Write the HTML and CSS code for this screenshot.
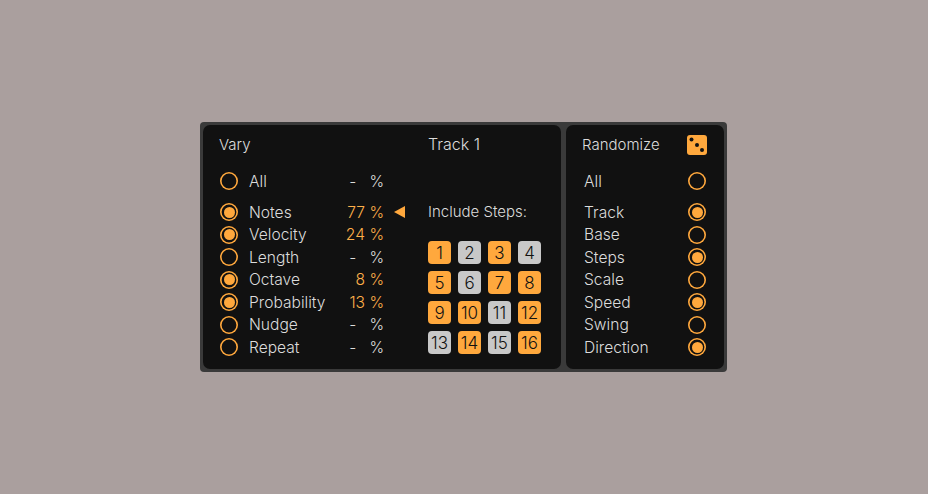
FILE: index.html
```html
<!doctype html>
<html lang="en">
<head>
    <meta charset="UTF-8">
    <title>Vary / Randomize</title>
    <link rel="stylesheet" href="styles.css">
</head>
<body>
    <div class="device">
        <section class="panel vary">
            <div class="vary-list">
                <h2 class="title">Vary</h2>
                <div class="row all"><span class="radio"></span><span class="name">All</span><span class="pct">-&nbsp;&nbsp;&nbsp;%</span></div>
                <div class="group">
                    <div class="row"><span class="radio on"></span><span class="name">Notes</span><span class="pct hot">77 %</span><span class="arrow"></span></div>
                    <div class="row"><span class="radio on"></span><span class="name">Velocity</span><span class="pct hot">24 %</span></div>
                    <div class="row"><span class="radio"></span><span class="name">Length</span><span class="pct">-&nbsp;&nbsp;&nbsp;%</span></div>
                    <div class="row"><span class="radio on"></span><span class="name">Octave</span><span class="pct hot">8 %</span></div>
                    <div class="row"><span class="radio on"></span><span class="name">Probability</span><span class="pct hot">13 %</span></div>
                    <div class="row"><span class="radio"></span><span class="name">Nudge</span><span class="pct">-&nbsp;&nbsp;&nbsp;%</span></div>
                    <div class="row"><span class="radio"></span><span class="name">Repeat</span><span class="pct">-&nbsp;&nbsp;&nbsp;%</span></div>
                </div>
            </div>
            <div class="track">
                <h2 class="title">Track 1</h2>
                <div class="include">Include Steps:</div>
                <div class="steps">
                    <span class="step on">1</span><span class="step">2</span><span class="step on">3</span><span class="step">4</span>
                    <span class="step on">5</span><span class="step">6</span><span class="step on">7</span><span class="step on">8</span>
                    <span class="step on">9</span><span class="step on">10</span><span class="step">11</span><span class="step on">12</span>
                    <span class="step">13</span><span class="step on">14</span><span class="step">15</span><span class="step on">16</span>
                </div>
            </div>
        </section>
        <section class="panel randomize">
            <div class="rand-head">
                <h2 class="title">Randomize</h2>
                <svg class="dice" width="20" height="20" viewBox="0 0 20 20">
                    <rect width="20" height="20" rx="3" fill="#ffa83d"/>
                    <circle cx="4.5" cy="4.5" r="2" fill="#111"/>
                    <circle cx="10" cy="10" r="2" fill="#111"/>
                    <circle cx="15" cy="15" r="2" fill="#111"/>
                </svg>
            </div>
            <div class="row all"><span class="name">All</span><span class="radio"></span></div>
            <div class="group">
                <div class="row"><span class="name">Track</span><span class="radio on"></span></div>
                <div class="row"><span class="name">Base</span><span class="radio"></span></div>
                <div class="row"><span class="name">Steps</span><span class="radio on"></span></div>
                <div class="row"><span class="name">Scale</span><span class="radio"></span></div>
                <div class="row"><span class="name">Speed</span><span class="radio on"></span></div>
                <div class="row"><span class="name">Swing</span><span class="radio"></span></div>
                <div class="row"><span class="name">Direction</span><span class="radio on"></span></div>
            </div>
        </section>
    </div>
</body>
</html>
```

FILE: styles.css
```css
* {
    box-sizing: border-box;
}
body {
    margin: 0;
    height: 494px;
    background-color: #aa9f9e;
    font-family: Inter, "Noto Sans", sans-serif;
    font-size: 15px;
    font-weight: 300;
    color: #dcdcdc;
    display: flex;
    justify-content: center;
    align-items: flex-start;
}
.device {
    margin-top: 122px;
    margin-left: -1px;
    width: 527px;
    height: 250px;
    padding: 3px;
    background-color: #3a3a3a;
    border-radius: 4px;
    display: flex;
    gap: 5px;
    opacity: 0.999;
}
.panel {
    background-color: #111;
    border-radius: 7px;
    height: 244px;
}
.title {
    margin: 0 0 0 -1px;
    font-size: inherit;
    font-weight: inherit;
    height: 22px;
    line-height: 22px;
}
.vary {
    width: 358px;
    padding: 9px 0 0 17px;
    display: flex;
}
.vary-list {
    width: 164px;
    margin-right: 44px;
}
.all {
    margin-top: 13.75px;
}
.group {
    margin-top: 8.5px;
}
.row {
    height: 22.5px;
    display: flex;
    align-items: center;
    position: relative;
    font-size: 15.6px;
}
.radio {
    flex: none;
    width: 18px;
    height: 18px;
    border-radius: 50%;
    padding: 3.5px;
    box-shadow: inset 0 0 0 1.6px #ffa83d;
}
.radio.on::before {
    content: "";
    display: block;
    width: 11px;
    height: 11px;
    border-radius: 50%;
    background-color: #ffa83d;
}
.vary .name {
    margin-left: 11px;
}
.pct {
    margin-left: auto;
    white-space: nowrap;
}
.hot {
    color: #ffb04a;
}
.arrow {
    position: absolute;
    left: 174px;
    top: 5px;
    width: 0;
    height: 0;
    border-top: 6px solid transparent;
    border-bottom: 6px solid transparent;
    border-right: 11px solid #ffa83d;
}
.track {
    flex: 1;
}
.track .title {
    margin-left: 0;
    font-size: 16px;
    height: 22px;
    line-height: 20px;
}
.include {
    margin-top: 45px;
    height: 22px;
    line-height: 22px;
}
.steps {
    margin-top: 18px;
    display: grid;
    grid-template-columns: repeat(4, 23px);
    grid-auto-rows: 23px;
    gap: 7px;
}
.step {
    background-color: #c8c8c8;
    color: #111;
    border-radius: 4px;
    display: flex;
    align-items: center;
    justify-content: center;
    font-size: 17px;
}
.step.on {
    background-color: #ffa83d;
}
.randomize {
    width: 158px;
    padding: 9px 18px 0 17px;
}
.rand-head {
    display: flex;
    justify-content: space-between;
    align-items: center;
    margin-right: -1px;
    height: 22px;
}
.randomize .name {
    flex: 1;
    margin-left: 1px;
}
```
